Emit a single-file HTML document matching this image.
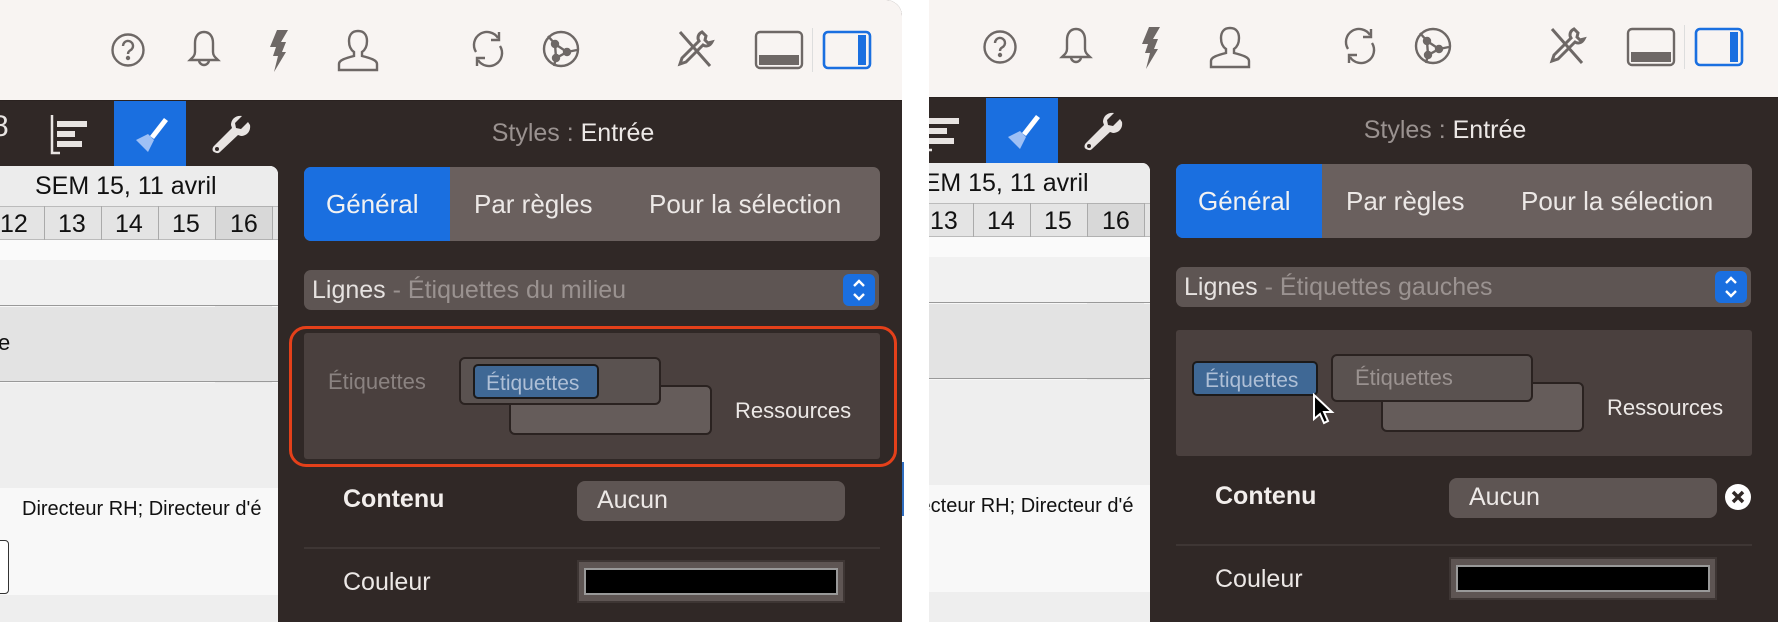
<!DOCTYPE html>
<html><head><meta charset="utf-8"><style>
*{margin:0;padding:0;box-sizing:border-box}
body{width:1778px;height:622px;background:#fff;position:relative;overflow:hidden;font-family:"Liberation Sans",sans-serif}
.clip{position:absolute;top:0;height:622px;overflow:hidden}
.panel{position:absolute;width:910px;height:626px;background:#302826}
.a{position:absolute}
.tb{left:0;top:0;width:910px;height:101px;background:#f8f4f2;border-bottom:1px solid #2a2220}
.t{position:absolute;white-space:nowrap;line-height:1}
svg.i{position:absolute}
.gantt{left:0;top:166px;width:278px;height:460px;background:#f7f7f7;border-top-right-radius:8px;overflow:hidden}
.seg{left:304px;top:167px;width:576px;height:74px;background:#6a605e;border-radius:7px;overflow:hidden}
.dd{left:304px;top:270px;width:575px;height:40px;background:#5e5553;border-radius:7px}
.lbox{left:304px;top:333px;width:576px;height:126px;background:#4a403e;border-radius:3px}
.b1{left:459px;top:357px;width:202px;height:48px;background:#5a5250;border:2px solid #2a2220;border-radius:6px}
.b2{left:509px;top:385px;width:203px;height:50px;background:#655c5a;border:2px solid #2a2220;border-radius:6px}
.chip{height:35px;width:126px;background:#3f6895;border:2px solid #1c1a1a;border-radius:5px;color:#aebfd6;font-size:21px;padding:6px 0 0 11px}
</style></head><body>

<!-- LEFT PANEL -->
<div class="clip" style="left:0;width:902px;border-top-right-radius:16px">
<div class="panel" style="left:0;top:0">
 <div class="a tb"></div>
 <svg class="i" style="left:108px;top:30px" width="40" height="40" viewBox="0 0 40 40" fill="none" stroke="#6e6866" stroke-width="2.4"><circle cx="20" cy="20" r="15.5"/><path d="M15 16a5 5 0 1 1 7 4.5c-1.5.8-2 1.6-2 3.5"/><circle cx="20" cy="28" r="1" fill="#6e6866"/></svg>
 <svg class="i" style="left:184px;top:28px" width="40" height="44" viewBox="0 0 40 44" fill="none" stroke="#6e6866" stroke-width="2.4"><path d="M20 4c-6 0-9 5-9 11v9c0 4-3 6-5 8h28c-2-2-5-4-5-8v-9c0-6-3-11-9-11z"/><path d="M15 32a5 5 0 0 0 10 0"/></svg>
 <svg class="i" style="left:266px;top:29px" width="24" height="44" viewBox="0 0 24 44"><path d="M11 1h11l-7 12h5l-4 10h4L8 43l4-16H7l3-9H4z" fill="#6e6866"/></svg>
 <svg class="i" style="left:334px;top:28px" width="48" height="46" viewBox="0 0 48 46" fill="none" stroke="#6e6866" stroke-width="2.4"><path d="M24 3c-6 0-9 4-9 10 0 5 2 9 5 11v4c-8 2-15 4-15 8v6h38v-6c0-4-7-6-15-8v-4c3-2 5-6 5-11 0-6-3-10-9-10z"/></svg>
 <svg class="i" style="left:468px;top:28px" width="40" height="42" viewBox="0 0 40 42" fill="none" stroke="#6e6866" stroke-width="2.4"><path d="M8 24a13 13 0 0 1 22-14"/><path d="M31 4v8h-8"/><path d="M32 18a13 13 0 0 1-22 14"/><path d="M9 38v-8h8"/></svg>
 <svg class="i" style="left:540px;top:28px" width="42" height="42" viewBox="0 0 42 42" fill="none" stroke="#6e6866" stroke-width="2.4"><circle cx="21" cy="21" r="17"/><circle cx="15" cy="16" r="3" fill="#6e6866"/><circle cx="27" cy="24" r="3" fill="#6e6866"/><circle cx="16" cy="30" r="3" fill="#6e6866"/><path d="M15 16l12 8-11 6zM15 16L8 8M27 24l10-2M16 30l-2 8"/></svg>
 <svg class="i" style="left:674px;top:28px" width="42" height="42" viewBox="0 0 42 42" fill="none" stroke="#6e6866" stroke-width="3"><path d="M6 4l30 34M28 4c-4 2-5 6-3 9L8 30l-2 6 6-2 17-17c3 2 7 1 9-3l-4 1-3-3 1-4z"/></svg>
 <svg class="i" style="left:754px;top:30px" width="50" height="40" viewBox="0 0 50 40" fill="none"><rect x="2" y="2" width="46" height="36" rx="4" stroke="#6e6866" stroke-width="2.4"/><rect x="5" y="25" width="40" height="10" fill="#6e6866"/></svg>
 <div class="a" style="left:812px;top:28px;width:1px;height:44px;background:#ddd"></div>
 <svg class="i" style="left:822px;top:30px" width="50" height="40" viewBox="0 0 50 40" fill="none"><rect x="2" y="2" width="46" height="36" rx="4" stroke="#1a6fe0" stroke-width="2.6"/><rect x="36" y="5" width="8" height="30" fill="#1a6fe0"/></svg>

 <div class="t" style="left:-8px;top:112px;color:#e8e4e2;font-size:30px">8</div>
 <svg class="i" style="left:48px;top:113px" width="44" height="42" viewBox="0 0 44 42"><path d="M4 2v38h8" stroke="#e8e4e2" stroke-width="2.5" fill="none"/><rect x="9" y="8" width="30" height="6" fill="#e8e4e2"/><rect x="9" y="18" width="18" height="6" fill="#e8e4e2"/><rect x="9" y="28" width="25" height="6" fill="#e8e4e2"/></svg>
 <div class="a" style="left:114px;top:101px;width:72px;height:65px;background:#1a6fe0"></div>
 <svg class="i" style="left:128px;top:114px" width="44" height="44" viewBox="0 0 44 44"><path d="M36 4l4 3-14 18-4-3z" fill="#fff"/><path d="M8 26l12-6 6 6-6 12z" fill="#9ec0f5"/></svg>
 <svg class="i" style="left:210px;top:114px" width="42" height="42" viewBox="0 0 42 42"><path d="M38 8l-7 7-5-1-1-5 7-7c-6-1-11 3-11 9l1 3L4 32c-2 2-2 5 0 6s4 2 6 0l18-17 3 1c6 0 10-5 9-11z" fill="#e8e4e2"/><circle cx="7" cy="35" r="2" fill="#302826"/></svg>

 <div class="t" style="left:0;width:1146px;top:121px;text-align:center;font-size:25px;color:#9a9290">Styles : <span style="color:#ece8e6">Entrée</span></div>

 <div class="a gantt">
  <div class="a" style="left:0;top:0;width:278px;height:40px;background:#ececec"></div>
  <div class="t" style="left:35px;top:8px;font-size:25px;color:#111">SEM 15, 11 avril</div>
  <div class="a" style="left:0;top:40px;width:278px;height:34px;background:#e4e4e4;border-top:1px solid #bbb;border-bottom:1px solid #bbb"></div>
  <div class="a" style="left:215px;top:40px;width:57px;height:440px;background:rgba(0,0,0,.05)"></div>
  <div class="a" style="left:44px;top:40px;width:1px;height:34px;background:#aaa"></div>
  <div class="a" style="left:101px;top:40px;width:1px;height:34px;background:#aaa"></div>
  <div class="a" style="left:158px;top:40px;width:1px;height:34px;background:#aaa"></div>
  <div class="a" style="left:215px;top:40px;width:1px;height:34px;background:#aaa"></div>
  <div class="a" style="left:272px;top:40px;width:1px;height:34px;background:#aaa"></div>
  <div class="t" style="left:0;top:46px;font-size:25px;color:#111">12</div>
  <div class="t" style="left:58px;top:46px;font-size:25px;color:#111">13</div>
  <div class="t" style="left:115px;top:46px;font-size:25px;color:#111">14</div>
  <div class="t" style="left:172px;top:46px;font-size:25px;color:#111">15</div>
  <div class="t" style="left:230px;top:46px;font-size:25px;color:#111">16</div>
  <div class="a" style="left:0;top:74px;width:278px;height:20px;background:#fafafa"></div>
  <div class="a" style="left:0;top:94px;width:278px;height:46px;background:#f1f1f1;border-bottom:1px solid #999"></div>
  <div class="a" style="left:0;top:141px;width:278px;height:75px;background:#e3e3e3;border-bottom:1px solid #999"></div>
  <div class="t" style="left:-2px;top:166px;font-size:22px;color:#111">e</div>
  <div class="a" style="left:0;top:217px;width:278px;height:105px;background:#eeeeee"></div>
  <div class="a" style="left:0;top:322px;width:278px;height:107px;background:#f8f8f8"></div>
  <div class="a" style="left:-6px;top:374px;width:15px;height:54px;border:1.5px solid #333;border-radius:4px;background:#fff"></div>
  <div class="t" style="left:22px;top:333px;font-size:20px;color:#111">Directeur RH; Directeur d'é</div>
  <div class="a" style="left:0;top:429px;width:278px;height:60px;background:#eeeeee"></div>
 </div>

 <div class="a seg">
  <div class="a" style="left:0;top:0;width:146px;height:74px;background:#1a6fe0"></div>
  <div class="t" style="left:22px;top:24px;font-size:26px;color:#f2f2f2">Général</div>
  <div class="t" style="left:170px;top:24px;font-size:26px;color:#ece8e6">Par règles</div>
  <div class="t" style="left:345px;top:24px;font-size:26px;color:#ece8e6">Pour la sélection</div>
 </div>
 <div class="a dd">
  <div class="t" style="left:8px;top:8px;font-size:25px;color:#e6e2e0">Lignes <span style="color:#9a9290">- Étiquettes du milieu</span></div>
  <div class="a" style="left:539px;top:4px;width:32px;height:32px;background:#1a6fe0;border-radius:6px"><svg width="32" height="32" viewBox="0 0 32 32" fill="none" stroke="#fff" stroke-width="2.4"><path d="M11 12l5-5 5 5M11 20l5 5 5-5"/></svg></div>
 </div>
 <div class="a" style="left:289px;top:326px;width:608px;height:141px;border:3px solid #e4401a;border-radius:17px"></div>
 <div class="a lbox"></div>
 <div class="t" style="left:328px;top:371px;font-size:22px;color:#8a8280">Étiquettes</div>
 <div class="a b2"></div>
 <div class="a b1"><div class="a chip" style="left:12px;top:5px">Étiquettes</div></div>
 <div class="t" style="left:735px;top:400px;font-size:22px;color:#ece8e6">Ressources</div>
 <div class="t" style="left:343px;top:487px;font-size:25px;font-weight:bold;color:#f2eeec">Contenu</div>
 <div class="a" style="left:577px;top:481px;width:268px;height:40px;background:#5e5553;border-radius:8px"></div>
 <div class="t" style="left:597px;top:488px;font-size:25px;color:#ece8e6">Aucun</div>
 <div class="a" style="left:304px;top:547px;width:576px;height:2px;background:#3e3634"></div>
 <div class="t" style="left:343px;top:570px;font-size:25px;color:#ece8e6">Couleur</div>
 <div class="a" style="left:577px;top:560px;width:268px;height:43px;background:#5e5553;border:2px solid #3e3634"></div>
 <div class="a" style="left:584px;top:568px;width:254px;height:27px;background:#000;border:2px solid #999"></div>
</div>
</div>
<div class="a" style="left:902px;top:462px;width:2px;height:54px;background:#2f6dc0"></div>

<!-- RIGHT PANEL -->
<div class="clip" style="left:929px;width:849px">
<div class="panel" style="left:-57px;top:-3px">
 <div class="a tb"></div>
 <svg class="i" style="left:108px;top:30px" width="40" height="40" viewBox="0 0 40 40" fill="none" stroke="#6e6866" stroke-width="2.4"><circle cx="20" cy="20" r="15.5"/><path d="M15 16a5 5 0 1 1 7 4.5c-1.5.8-2 1.6-2 3.5"/><circle cx="20" cy="28" r="1" fill="#6e6866"/></svg>
 <svg class="i" style="left:184px;top:28px" width="40" height="44" viewBox="0 0 40 44" fill="none" stroke="#6e6866" stroke-width="2.4"><path d="M20 4c-6 0-9 5-9 11v9c0 4-3 6-5 8h28c-2-2-5-4-5-8v-9c0-6-3-11-9-11z"/><path d="M15 32a5 5 0 0 0 10 0"/></svg>
 <svg class="i" style="left:266px;top:29px" width="24" height="44" viewBox="0 0 24 44"><path d="M11 1h11l-7 12h5l-4 10h4L8 43l4-16H7l3-9H4z" fill="#6e6866"/></svg>
 <svg class="i" style="left:334px;top:28px" width="48" height="46" viewBox="0 0 48 46" fill="none" stroke="#6e6866" stroke-width="2.4"><path d="M24 3c-6 0-9 4-9 10 0 5 2 9 5 11v4c-8 2-15 4-15 8v6h38v-6c0-4-7-6-15-8v-4c3-2 5-6 5-11 0-6-3-10-9-10z"/></svg>
 <svg class="i" style="left:468px;top:28px" width="40" height="42" viewBox="0 0 40 42" fill="none" stroke="#6e6866" stroke-width="2.4"><path d="M8 24a13 13 0 0 1 22-14"/><path d="M31 4v8h-8"/><path d="M32 18a13 13 0 0 1-22 14"/><path d="M9 38v-8h8"/></svg>
 <svg class="i" style="left:540px;top:28px" width="42" height="42" viewBox="0 0 42 42" fill="none" stroke="#6e6866" stroke-width="2.4"><circle cx="21" cy="21" r="17"/><circle cx="15" cy="16" r="3" fill="#6e6866"/><circle cx="27" cy="24" r="3" fill="#6e6866"/><circle cx="16" cy="30" r="3" fill="#6e6866"/><path d="M15 16l12 8-11 6zM15 16L8 8M27 24l10-2M16 30l-2 8"/></svg>
 <svg class="i" style="left:674px;top:28px" width="42" height="42" viewBox="0 0 42 42" fill="none" stroke="#6e6866" stroke-width="3"><path d="M6 4l30 34M28 4c-4 2-5 6-3 9L8 30l-2 6 6-2 17-17c3 2 7 1 9-3l-4 1-3-3 1-4z"/></svg>
 <svg class="i" style="left:754px;top:30px" width="50" height="40" viewBox="0 0 50 40" fill="none"><rect x="2" y="2" width="46" height="36" rx="4" stroke="#6e6866" stroke-width="2.4"/><rect x="5" y="25" width="40" height="10" fill="#6e6866"/></svg>
 <div class="a" style="left:812px;top:28px;width:1px;height:44px;background:#ddd"></div>
 <svg class="i" style="left:822px;top:30px" width="50" height="40" viewBox="0 0 50 40" fill="none"><rect x="2" y="2" width="46" height="36" rx="4" stroke="#1a6fe0" stroke-width="2.6"/><rect x="36" y="5" width="8" height="30" fill="#1a6fe0"/></svg>

 <svg class="i" style="left:48px;top:113px" width="44" height="42" viewBox="0 0 44 42"><path d="M4 2v38h8" stroke="#e8e4e2" stroke-width="2.5" fill="none"/><rect x="9" y="8" width="30" height="6" fill="#e8e4e2"/><rect x="9" y="18" width="18" height="6" fill="#e8e4e2"/><rect x="9" y="28" width="25" height="6" fill="#e8e4e2"/></svg>
 <div class="a" style="left:114px;top:101px;width:72px;height:65px;background:#1a6fe0"></div>
 <svg class="i" style="left:128px;top:114px" width="44" height="44" viewBox="0 0 44 44"><path d="M36 4l4 3-14 18-4-3z" fill="#fff"/><path d="M8 26l12-6 6 6-6 12z" fill="#9ec0f5"/></svg>
 <svg class="i" style="left:210px;top:114px" width="42" height="42" viewBox="0 0 42 42"><path d="M38 8l-7 7-5-1-1-5 7-7c-6-1-11 3-11 9l1 3L4 32c-2 2-2 5 0 6s4 2 6 0l18-17 3 1c6 0 10-5 9-11z" fill="#e8e4e2"/><circle cx="7" cy="35" r="2" fill="#302826"/></svg>

 <div class="t" style="left:0;width:1146px;top:121px;text-align:center;font-size:25px;color:#9a9290">Styles : <span style="color:#ece8e6">Entrée</span></div>

 <div class="a gantt">
  <div class="a" style="left:0;top:0;width:278px;height:40px;background:#ececec"></div>
  <div class="t" style="left:35px;top:8px;font-size:25px;color:#111">SEM 15, 11 avril</div>
  <div class="a" style="left:0;top:40px;width:278px;height:34px;background:#e4e4e4;border-top:1px solid #bbb;border-bottom:1px solid #bbb"></div>
  <div class="a" style="left:215px;top:40px;width:57px;height:440px;background:rgba(0,0,0,.05)"></div>
  <div class="a" style="left:101px;top:40px;width:1px;height:34px;background:#aaa"></div>
  <div class="a" style="left:158px;top:40px;width:1px;height:34px;background:#aaa"></div>
  <div class="a" style="left:215px;top:40px;width:1px;height:34px;background:#aaa"></div>
  <div class="a" style="left:272px;top:40px;width:1px;height:34px;background:#aaa"></div>
  <div class="t" style="left:58px;top:46px;font-size:25px;color:#111">13</div>
  <div class="t" style="left:115px;top:46px;font-size:25px;color:#111">14</div>
  <div class="t" style="left:172px;top:46px;font-size:25px;color:#111">15</div>
  <div class="t" style="left:230px;top:46px;font-size:25px;color:#111">16</div>
  <div class="a" style="left:0;top:74px;width:278px;height:20px;background:#fafafa"></div>
  <div class="a" style="left:0;top:94px;width:278px;height:46px;background:#f1f1f1;border-bottom:1px solid #999"></div>
  <div class="a" style="left:0;top:141px;width:278px;height:75px;background:#e3e3e3;border-bottom:1px solid #999"></div>
  <div class="a" style="left:0;top:217px;width:278px;height:105px;background:#eeeeee"></div>
  <div class="a" style="left:0;top:322px;width:278px;height:107px;background:#f8f8f8"></div>
  <div class="t" style="left:22px;top:333px;font-size:20px;color:#111">Directeur RH; Directeur d'é</div>
  <div class="a" style="left:0;top:429px;width:278px;height:60px;background:#eeeeee"></div>
 </div>

 <div class="a seg">
  <div class="a" style="left:0;top:0;width:146px;height:74px;background:#1a6fe0"></div>
  <div class="t" style="left:22px;top:24px;font-size:26px;color:#f2f2f2">Général</div>
  <div class="t" style="left:170px;top:24px;font-size:26px;color:#ece8e6">Par règles</div>
  <div class="t" style="left:345px;top:24px;font-size:26px;color:#ece8e6">Pour la sélection</div>
 </div>
 <div class="a dd">
  <div class="t" style="left:8px;top:8px;font-size:25px;color:#e6e2e0">Lignes <span style="color:#9a9290">- Étiquettes gauches</span></div>
  <div class="a" style="left:539px;top:4px;width:32px;height:32px;background:#1a6fe0;border-radius:6px"><svg width="32" height="32" viewBox="0 0 32 32" fill="none" stroke="#fff" stroke-width="2.4"><path d="M11 12l5-5 5 5M11 20l5 5 5-5"/></svg></div>
 </div>
 <div class="a lbox"></div>
 <div class="a chip" style="left:320px;top:364px">Étiquettes</div>
 <div class="a b2"></div>
 <div class="a b1"><div class="t" style="left:22px;top:11px;font-size:22px;color:#9a9290">Étiquettes</div></div>
 <svg class="i" style="left:440px;top:396px" width="26" height="34" viewBox="0 0 26 34"><path d="M2 2v24l6-5 4 9 4-2-4-9h8z" fill="#000" stroke="#fff" stroke-width="2"/></svg>
 <div class="t" style="left:735px;top:400px;font-size:22px;color:#ece8e6">Ressources</div>
 <div class="t" style="left:343px;top:487px;font-size:25px;font-weight:bold;color:#f2eeec">Contenu</div>
 <div class="a" style="left:577px;top:481px;width:268px;height:40px;background:#5e5553;border-radius:8px"></div>
 <div class="t" style="left:597px;top:488px;font-size:25px;color:#ece8e6">Aucun</div>
 <svg class="i" style="left:852px;top:486px" width="28" height="28" viewBox="0 0 28 28"><circle cx="14" cy="14" r="13" fill="#fff"/><path d="M9 9l10 10M19 9L9 19" stroke="#302826" stroke-width="3.5"/></svg>
 <div class="a" style="left:304px;top:547px;width:576px;height:2px;background:#3e3634"></div>
 <div class="t" style="left:343px;top:570px;font-size:25px;color:#ece8e6">Couleur</div>
 <div class="a" style="left:577px;top:560px;width:268px;height:43px;background:#5e5553;border:2px solid #3e3634"></div>
 <div class="a" style="left:584px;top:568px;width:254px;height:27px;background:#000;border:2px solid #999"></div>
</div>
</div>
</body></html>
